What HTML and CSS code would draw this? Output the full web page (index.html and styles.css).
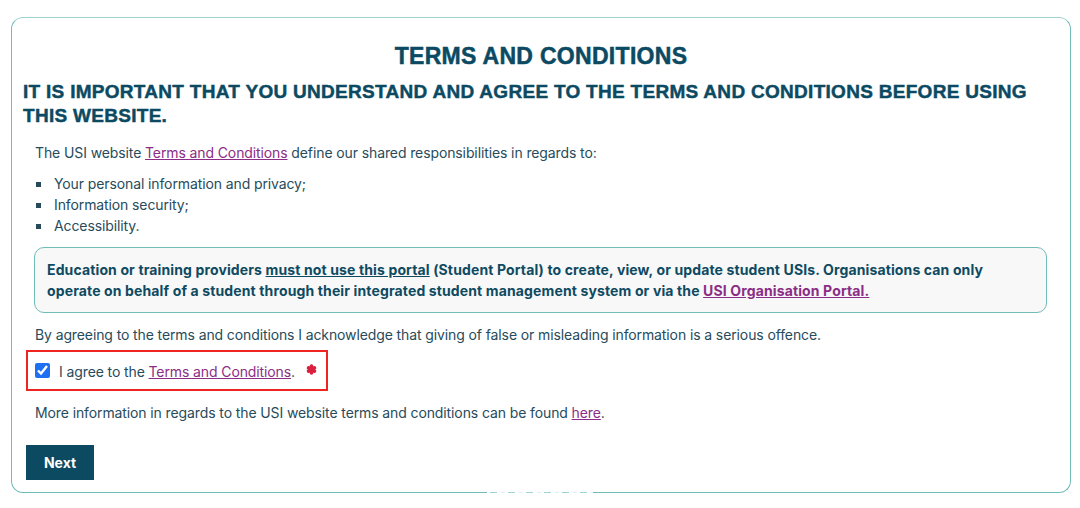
FILE: index.html
```html
<!DOCTYPE html>
<html lang="en">
<head>
<meta charset="utf-8">
<title>Terms and Conditions</title>
<link rel="stylesheet" href="styles.css">
</head>
<body>
<div class="page">
  <div class="card">
    <h1 class="title">TERMS AND CONDITIONS</h1>
    <h2 class="subtitle">IT IS IMPORTANT THAT YOU UNDERSTAND AND AGREE TO THE TERMS AND CONDITIONS BEFORE USING THIS WEBSITE.</h2>
    <div class="content">
      <p class="text">The USI website <a href="#" class="link">Terms and Conditions</a> define our shared responsibilities in regards to:</p>
      <ul class="bullets">
        <li>Your personal information and privacy;</li>
        <li>Information security;</li>
        <li>Accessibility.</li>
      </ul>
      <div class="notice">Education or training providers <span class="underline">must not use this portal</span> (Student Portal) to create, view, or update student USIs. Organisations can only operate on behalf of a student through their integrated student management system or via the <a href="#" class="link">USI Organisation Portal.</a></div>
      <p class="text ack">By agreeing to the terms and conditions I acknowledge that giving of false or misleading information is a serious offence.</p>
      <label class="agree">
        <input type="checkbox" class="check" checked>
        <span class="agree-text">I agree to the <a href="#" class="link">Terms and Conditions</a>.</span>
        <svg class="req" viewBox="0 0 12 12" width="11" height="11" aria-hidden="true">
          <g fill="#d9203f">
            <rect x="4" y="0.3" width="4" height="11.4" rx="2"/>
            <rect x="4" y="0.3" width="4" height="11.4" rx="2" transform="rotate(60 6 6)"/>
            <rect x="4" y="0.3" width="4" height="11.4" rx="2" transform="rotate(-60 6 6)"/>
            <circle cx="6" cy="6" r="3.4"/>
          </g>
        </svg>
      </label>
      <p class="text more">More information in regards to the USI website terms and conditions can be found <a href="#" class="link">here</a>.</p>
      <button class="next" type="button">Next</button>
    </div>
    <div class="border-glitch"></div>
  </div>
</div>
</body>
</html>
```
FILE: styles.css
```css
* { box-sizing: border-box; }
html, body { margin: 0; padding: 0; background: #ffffff; }
body {
  font-family: Inter, "Noto Sans", "Liberation Sans", sans-serif;
  color: #274b5b;
}
.page {
  width: 1080px;
  height: 508px;
  padding: 17px 9px 0 11px;
}
.card {
  position: relative;
  width: 1060px;
  height: 476px;
  border: 1px solid #6fbcb9;
  border-top-color: #9ed2d0;
  border-radius: 12px;
  padding: 0 11px 0 11px;
}
.title {
  margin: 26px 0 0 0;
  text-align: center;
  font-family: "Liberation Sans", Arial, sans-serif;
  font-weight: 700;
  font-size: 23px;
  line-height: 24px;
  color: #0b4a62;
  -webkit-text-stroke: 0.5px #0b4a62;
  letter-spacing: 0.3px;
}
.subtitle {
  margin: 12px 0 0 0;
  font-family: "Liberation Sans", Arial, sans-serif;
  font-weight: 700;
  font-size: 19px;
  line-height: 24px;
  color: #0b4a62;
  -webkit-text-stroke: 0.45px #0b4a62;
  letter-spacing: 0.29px;
}
.content {
  margin: 14px 0 0 3px;
}
.text {
  margin: 0;
  padding-left: 9px;
  font-size: 14px;
  line-height: 21px;
  letter-spacing: -0.11px;
}
.link {
  color: #8b2d86;
  text-decoration: underline;
}
.bullets {
  margin: 10px 0 0 0;
  padding: 0 0 0 28px;
  list-style: none;
  font-size: 14px;
  line-height: 21px;
  letter-spacing: -0.11px;
}
.bullets li {
  position: relative;
}
.bullets li::before {
  content: "";
  position: absolute;
  left: -18px;
  top: 9px;
  width: 5px;
  height: 5px;
  background: #274b5b;
}
.notice {
  margin: 11px 12px 0 8px;
  padding: 11px 12px 11px 12px;
  border: 1px solid #6fbcb9;
  border-radius: 10px;
  background: #f8f8f8;
  font-size: 14px;
  line-height: 21px;
  font-weight: 700;
  letter-spacing: 0.13px;
  color: #0e4a61;
}
.underline { text-decoration: underline; }
.ack { margin-top: 11px; }
.agree {
  display: inline-flex;
  align-items: center;
  margin-top: 5px;
  width: 302px;
  height: 41px;
  border: 2px solid #ee2420;
  padding: 0 0 0 7px;
  font-size: 14px;
  line-height: 21px;
  letter-spacing: -0.11px;
}
.check {
  margin: 0 9px 0 0;
  width: 15px;
  height: 15px;
  accent-color: #1f6ff2;
}
.agree-text { margin-top: 1px; }
.req { margin: -3px 0 0 11px; }
.more { margin-top: 11px; }
.next {
  display: block;
  margin-top: 22px;
  width: 68px;
  height: 35px;
  border: 0;
  border-radius: 0;
  background: #0c4a62;
  color: #ffffff;
  font-family: Inter, "Noto Sans", sans-serif;
  font-weight: 700;
  font-size: 14px;
}
.border-glitch {
  position: absolute;
  left: 475px;
  bottom: -1px;
  width: 106px;
  height: 1px;
  background: repeating-linear-gradient(90deg, #ffffff 0 3px, #9fd3d0 3px 10px, #ffffff 10px 14px, #e3f2f1 14px 18px);
}
```
